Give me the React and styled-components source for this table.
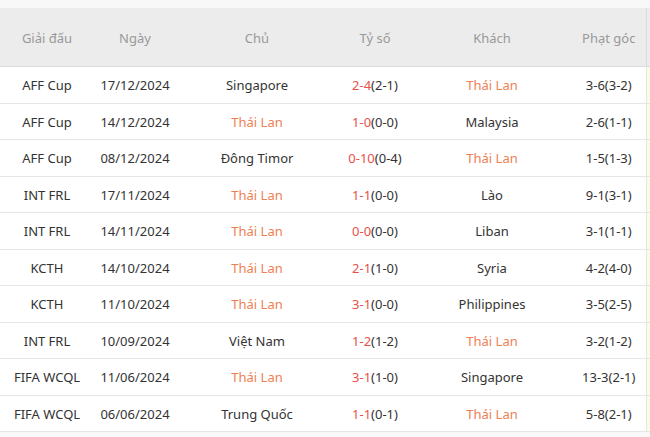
import React from 'react'
import styled, { createGlobalStyle } from 'styled-components'

const Global = createGlobalStyle`
  html, body { margin: 0; padding: 0; background: #fff; }
  body { font-family: "Noto Sans", "Liberation Sans", sans-serif; }
`

const Wrap = styled.div`
  padding-top: 8px;
  width: 650px;
  height: 437px;
  overflow: hidden;
  background: #f8f8f8;
`

const Table = styled.table`
  width: 660px;
  border-collapse: collapse;
  table-layout: fixed;
  font-size: 13px;
  color: #333;
`

const Th = styled.th`
  height: 56px;
  background: #ececec;
  color: #999;
  font-weight: normal;
  text-align: center;
  padding: 2px 0 0;
  border-bottom: 1px solid #dcdcdc;
  border-right: ${p => (p.$edge ? '1px solid #dadada' : 'none')};
`

const Row = styled.tr`
  height: 36.5px;
  background: #fff;
  border-bottom: 1px solid #e6e6e6;
`

const Td = styled.td`
  padding: 1px 0 0;
  text-align: center;
  white-space: nowrap;
  color: ${p => (p.$home ? '#ee7f55' : '#333')};
  border-right: ${p => (p.$edge ? '1px solid #e6e6e6' : 'none')};
`

const Extra = styled.td`
  background: #fffbe3;
`

const Red = styled.span`
  color: #e8504d;
`

const cols = [94, 82, 162, 74, 160, 74, 14]

const matches = [
  ['AFF Cup', '17/12/2024', 'Singapore', '2-4', '(2-1)', 'Thái Lan', '3-6(3-2)'],
  ['AFF Cup', '14/12/2024', 'Thái Lan', '1-0', '(0-0)', 'Malaysia', '2-6(1-1)'],
  ['AFF Cup', '08/12/2024', 'Đông Timor', '0-10', '(0-4)', 'Thái Lan', '1-5(1-3)'],
  ['INT FRL', '17/11/2024', 'Thái Lan', '1-1', '(0-0)', 'Lào', '9-1(3-1)'],
  ['INT FRL', '14/11/2024', 'Thái Lan', '0-0', '(0-0)', 'Liban', '3-1(1-1)'],
  ['KCTH', '14/10/2024', 'Thái Lan', '2-1', '(1-0)', 'Syria', '4-2(4-0)'],
  ['KCTH', '11/10/2024', 'Thái Lan', '3-1', '(0-0)', 'Philippines', '3-5(2-5)'],
  ['INT FRL', '10/09/2024', 'Việt Nam', '1-2', '(1-2)', 'Thái Lan', '3-2(1-2)'],
  ['FIFA WCQL', '11/06/2024', 'Thái Lan', '3-1', '(1-0)', 'Singapore', '13-3(2-1)'],
  ['FIFA WCQL', '06/06/2024', 'Trung Quốc', '1-1', '(0-1)', 'Thái Lan', '5-8(2-1)'],
]

export default function App () {
  return (
    <Wrap>
      <Global />
      <Table>
        <colgroup>
          {cols.map((w, i) => <col key={i} style={{ width: w }} />)}
        </colgroup>
        <thead>
          <tr>
            <Th>Giải đấu</Th>
            <Th>Ngày</Th>
            <Th>Chủ</Th>
            <Th>Tỷ số</Th>
            <Th>Khách</Th>
            <Th $edge>Phạt góc</Th>
            <Th />
          </tr>
        </thead>
        <tbody>
          {matches.map((m, i) => (
            <Row key={i}>
              <Td>{m[0]}</Td>
              <Td>{m[1]}</Td>
              <Td $home={m[2] === 'Thái Lan'}>{m[2]}</Td>
              <Td><Red>{m[3]}</Red>{m[4]}</Td>
              <Td $home={m[5] === 'Thái Lan'}>{m[5]}</Td>
              <Td $edge>{m[6]}</Td>
              <Extra />
            </Row>
          ))}
        </tbody>
      </Table>
    </Wrap>
  )
}
